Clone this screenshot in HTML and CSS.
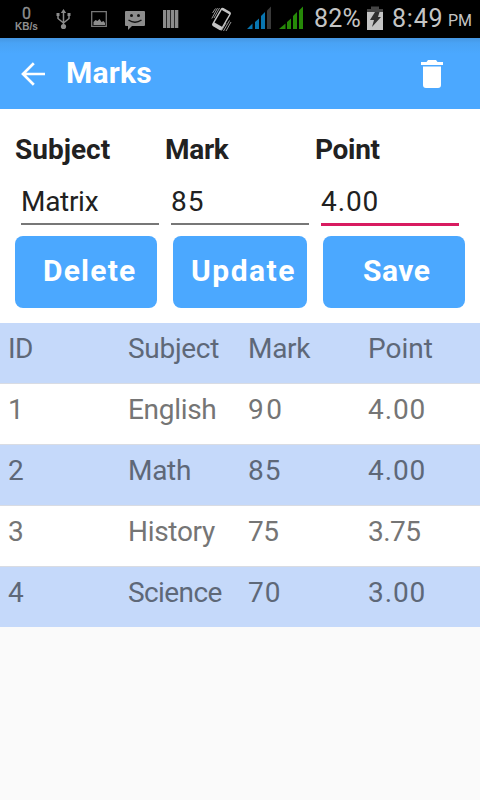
FILE: index.html
```html
<!DOCTYPE html>
<html lang="en">
<head>
<meta charset="utf-8">
<title>Marks</title>
<link rel="stylesheet" href="styles.css">
</head>
<body>
<div class="status">
  <div class="speed"><span class="rate">0</span><span class="unit">KB/s</span></div>
  <svg class="tray" width="158" height="38" viewBox="50 0 158 38" aria-hidden="true">
    <g fill="none" stroke="#8c8c8c" stroke-width="1.5">
      <path d="M63.500 27V11M58 15v3.500L63.500 23M69 15v3.500L63.500 23"/>
      <path d="M91.700 11.700h14.600v14.600H91.700z" stroke="#777" stroke-width="1.300"/>
    </g>
    <g fill="#8c8c8c">
      <circle cx="63.500" cy="26.500" r="2.600"/><path d="M60.800 13l2.700-4 2.700 4zM56.500 13h3v3h-3zM67.500 13h3v3h-3z"/>
      <path d="M93.500 25v-3l2-2 2 1 2-2 2 3 2-1 1.500 2v2z"/>
      <path d="M126 11h18q1 0 1 1v13q0 1-1 1h-12l-4 4v-4h-2q-1 0-1-1V12q0-1 1-1z"/>
      <path d="M163 10h3.300v18H163zM167 10h3.300v18H167zM171 10h3.300v18H171zM175 10h3.300v18H175z"/>
    </g>
    <g fill="#111"><circle cx="131.500" cy="15.500" r="1.500"/><circle cx="138.500" cy="15.500" r="1.500"/></g>
    <path d="M128.500 20q6.500 4.500 13 0" fill="none" stroke="#111" stroke-width="1.500"/>
  </svg>
  <svg class="signals" width="95" height="38" viewBox="208 0 95 38" aria-hidden="true">
    <g transform="rotate(30 221.500 19)">
      <rect x="215.800" y="8.500" width="11.400" height="21" rx="2" fill="#c4c4c4"/>
      <rect x="217.200" y="11" width="8.600" height="14.500" fill="#000"/>
    </g>
    <path d="M211.800 18.500l5.700-10.500M214 18l5.500-10M212.500 13l3-4.500M223.500 31l6-10.500M226 31l5-9M221.500 30.500l4.500-7.500" stroke="#aaa" stroke-width=".9"/>
    <path d="M247 29h5.500v-5.500zM255 29h4v-10.500l-4 3.500zM261 29h4V12l-4 4z" fill="#0875b0"/>
    <path d="M267 29h4V6.500l-4 4z" fill="#3a3a3a"/>
    <path d="M279 29h6.500v-5.500zM287 29h4v-10.500l-4 3.500zM293 29h4V12l-4 4zM299 29h4V6.500l-4 4z" fill="#268908"/>
  </svg>
  <span class="percent">82%</span>
  <svg class="battery" width="16" height="38" viewBox="367 0 16 38" aria-hidden="true">
    <path d="M367 9h4V6.500h8V9h4v5h-16z" fill="#454545"/><path d="M367 12h16v18h-16z" fill="#c4c4c4"/>
    <path d="M375 12h4.500l-1.500 5h3L372 27l2-7h-4z" fill="#303030"/>
  </svg>
  <span class="clock">8:49</span><span class="pm">PM</span>
</div>
<header class="bar">
  <svg class="back" width="24" height="24" viewBox="0 0 24 24" aria-hidden="true"><path d="M24 12H2M12.800 1.200L2 12l10.800 10.800" fill="none" stroke="#fff" stroke-width="2.700"/></svg>
  <h1>Marks</h1>
  <svg class="trash" width="22" height="28" viewBox="0 0 22 28" aria-hidden="true"><path d="M0 2h5.500L7 0h8l1.500 2H22v3H0zM2 6.500h18V25q0 3-3 3H5q-3 0-3-3z" fill="#fff"/></svg>
</header>
<main>
  <section class="form">
    <div class="fields">
      <div class="field"><div class="label">Subject</div><div class="input text">Matrix</div></div>
      <div class="field"><div class="label tight">Mark</div><div class="input number">85</div></div>
      <div class="field"><div class="label tight">Point</div><div class="input number focused">4.00</div></div>
    </div>
    <div class="buttons">
      <div class="button delete">Delete</div>
      <div class="button update">Update</div>
      <div class="button save">Save</div>
    </div>
  </section>
  <section class="table">
    <div class="row"><span class="id">ID</span><span class="text">Subject</span><span class="text">Mark</span><span>Point</span></div>
    <div class="row"><span>1</span><span class="text">English</span><span class="number wide">90</span><span class="number">4.00</span></div>
    <div class="row"><span>2</span><span class="text">Math</span><span class="number">85</span><span class="number">4.00</span></div>
    <div class="row"><span>3</span><span class="text">History</span><span class="seven">75</span><span class="seven">3.75</span></div>
    <div class="row"><span>4</span><span class="science">Science</span><span class="number">70</span><span class="number">3.00</span></div>
  </section>
</main>
</body>
</html>
```
FILE: styles.css
```css
* { box-sizing: border-box; }
body { margin: 0; width: 480px; height: 800px; overflow: hidden; background: #fafafa; color: #212121; font-family: Roboto, "Noto Sans", sans-serif; font-size: 28px; }
svg { display: block; flex: none; }
.status { height: 38px; display: flex; background: #000; color: #c4c4c4; white-space: nowrap; }
.speed { width: 50px; padding: 6px 0 0 3px; display: flex; flex-direction: column; align-items: center; color: #909090; }
.rate { font-size: 16px; line-height: 16px; -webkit-text-stroke: 0.3px; }
.unit { font: bold 10px/10px "Liberation Sans", sans-serif; }
.percent { width: 64px; padding-left: 11px; font-size: 25px; line-height: 37px; letter-spacing: 0.2px; }
.clock { width: 56px; margin-left: 9px; font-size: 25px; line-height: 37px; letter-spacing: 0.8px; }
.pm { font-size: 16px; line-height: 41px; }
.bar { height: 71px; display: flex; align-items: center; padding: 0 37px 0 21px; color: #fff; background: linear-gradient(#4596e2, #49a3f5 5px, #4ba8ff 16px); }
h1 { margin: -2px 0 0 21px; font-size: 30px; line-height: 36px; letter-spacing: 0.2px; }
.trash { margin-left: auto; }
.form { height: 214px; padding: 24px 15px 15px; background: #fff; }
.fields { display: grid; grid-template-columns: repeat(3, 150px); height: 103px; }
.label { height: 51px; font-weight: 700; line-height: 34px; }
.tight { letter-spacing: -0.3px; }
.input { width: 138px; height: 41px; margin-left: 6px; border-bottom: 2px solid #777; line-height: 36px; }
.focused { height: 42px; border-bottom: 3px solid #d81b60; }
.buttons { display: grid; grid-template-columns: 142px 134px 142px; gap: 16px; }
.button { height: 72px; border-radius: 8px; background: #4ba8ff; color: #fff; font-size: 30px; font-weight: 700; line-height: 69px; }
.delete { padding-left: 28px; letter-spacing: 1.2px; }
.update { padding-left: 18px; letter-spacing: 1.5px; }
.save { padding-left: 40px; letter-spacing: 0.5px; }
.row { height: 61px; display: grid; grid-template-columns: repeat(4, 120px); padding-left: 8px; border-bottom: 1px solid #d9dce3; background: #fff; color: #757575; line-height: 51px; }
.row:nth-child(odd) { background: #c5d9fa; color: #5e6878; }
.row:last-child { height: 60px; border: 0; }
.id { letter-spacing: -0.6px; }
.text { letter-spacing: -0.3px; }
.science { letter-spacing: -0.6px; }
.number { letter-spacing: 0.9px; }
.wide { letter-spacing: 2.5px; }
.seven { letter-spacing: -0.5px; }
```
